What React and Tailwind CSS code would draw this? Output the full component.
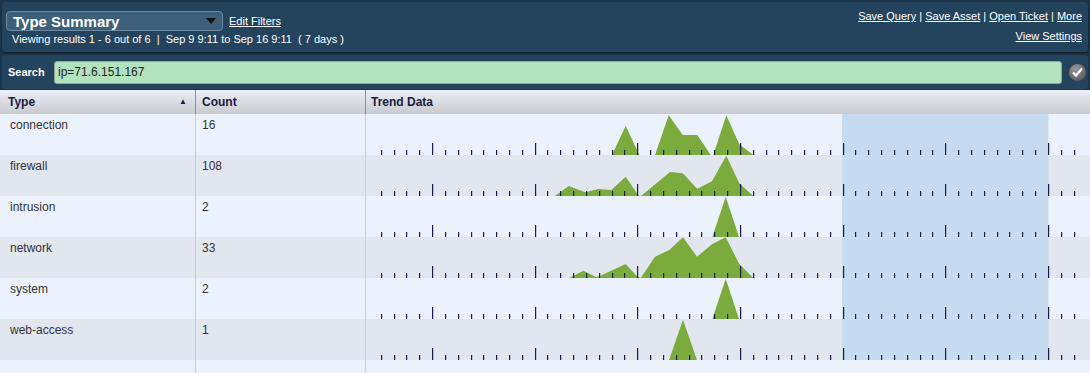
import React from "react";

// tick layout of the trend column (x is relative to the column's left edge)
const TICK_START = 14.7;
const STEP = 12.83;
const TREND_LEFT = 366;
const tickX = (i) => TICK_START + STEP * i;

const ROWS = [
  {
    type: "connection",
    count: "16",
    shapes: [
      [[612, 41], [625.7, 11.7], [639.3, 41]],
      [[655, 41], [668.7, 1.3], [682.7, 21], [697.3, 21], [710.7, 41]],
      [[713.3, 41], [726.3, 1.3], [739.3, 30.3], [753.3, 41]],
    ],
  },
  {
    type: "firewall",
    count: "108",
    shapes: [
      [
        [555, 41], [568.7, 31], [585.3, 37.3], [598.3, 34], [611.3, 35],
        [625.7, 21.7], [638.5, 40.5], [641, 41], [670, 17], [682.7, 18.3],
        [697.3, 33.7], [712, 26.3], [726.3, 0.7], [739.3, 28.3], [753.3, 41],
      ],
    ],
  },
  {
    type: "intrusion",
    count: "2",
    shapes: [[[712.3, 41], [725.7, 0.7], [739, 41]]],
  },
  {
    type: "network",
    count: "33",
    shapes: [
      [
        [569.3, 41], [583.3, 33.7], [596, 40], [598.7, 39.5], [625.7, 27],
        [636.7, 39], [640.7, 41], [655, 19.7], [669.3, 13], [683, 0.3],
        [697, 19.7], [712.3, 7], [725.7, 0.3], [739.3, 27], [753.3, 41],
      ],
    ],
  },
  {
    type: "system",
    count: "2",
    shapes: [[[712.3, 41], [725.7, 0.7], [739, 41]]],
  },
  {
    type: "web-access",
    count: "1",
    shapes: [[[669, 41], [683, 0.7], [697, 41]]],
  },
];

const TrendChart = ({ shapes }) => (
  <svg width="724" height="41" className="block">
    {/* highlighted time window */}
    <rect
      x={tickX(36) - 0.5}
      y="0"
      width={tickX(52) - tickX(36) + 1}
      height="41"
      fill="#c6dbef"
    />
    {shapes.map((pts, i) => (
      <polygon
        key={i}
        points={pts.map(([x, y]) => `${x - TREND_LEFT},${y}`).join(" ")}
        fill="#7aab3c"
      />
    ))}
    {Array.from({ length: 55 }, (_, i) => {
      const tall = i % 8 === 4;
      return (
        <rect
          key={i}
          x={Math.round(tickX(i))}
          y={tall ? 29 : 36}
          width="1.2"
          height={tall ? 12 : 5}
          fill="#1b1b4b"
        />
      );
    })}
  </svg>
);

const App = () => {
  return (
    <div className="w-[1090px] h-[373px] overflow-hidden bg-[#1b364c] font-['Liberation_Sans',Arial,sans-serif] text-white">
      {/* Top panel */}
      <div className="mx-[2px] pt-[2px]">
        <div className="h-[50px] rounded-[3px] bg-[#24435c] shadow-[0_1px_2px_rgba(0,0,0,0.5)] flex justify-between">
          <div className="pl-[4px] pt-[9px]">
            <div className="flex items-center gap-[6px]">
              <div className="w-[217px] h-[20px] rounded-[4px] border border-[#6b8aa1] bg-[#3e5f79] flex items-center justify-between pl-[6px] pr-[6px]">
                <span className="text-[15px] font-bold leading-none">
                  Type Summary
                </span>
                <svg width="10" height="6" viewBox="0 0 10 6">
                  <polygon points="0,0 10,0 5,6" fill="#111" />
                </svg>
              </div>
              <a className="text-[11px] underline leading-[13px]">Edit Filters</a>
            </div>
            <div className="mt-[2px] pl-[6px] text-[11px] leading-[13px] whitespace-pre">
              Viewing results 1 - 6 out of 6{"  "}|{"  "}Sep 9 9:11 to Sep 16 9:11{"  "}( 7 days )
            </div>
          </div>
          <div className="pr-[6px] pt-[8px] text-[11px] leading-[13px] text-right">
            <div>
              <a className="underline">Save Query</a> | <a className="underline">Save Asset</a> |{" "}
              <a className="underline">Open Ticket</a> | <a className="underline">More</a>
            </div>
            <div className="mt-[7px]">
              <a className="underline">View Settings</a>
            </div>
          </div>
        </div>
      </div>

      {/* Search panel */}
      <div className="mx-[2px] mt-[3px] h-[34px] rounded-[3px] bg-[#24435c] flex items-center pl-[6px]">
        <span className="text-[11px] font-bold w-[46px]">Search</span>
        <div className="w-[1008px] h-[23px] rounded-[3px] border border-[#8ea6a0] bg-[#b3e3be] flex items-center pl-[3px] text-[12px] text-[#222]">
          ip=71.6.151.167
        </div>
        <div className="ml-[7px] w-[17px] h-[17px] rounded-full bg-[radial-gradient(circle_at_40%_30%,#9a9a9a,#4a4a4a)] flex items-center justify-center">
          <svg width="11" height="10" viewBox="0 0 11 10">
            <path d="M1 5.5 L4 8.5 L10 1.5" stroke="#fff" strokeWidth="2.2" fill="none" />
          </svg>
        </div>
      </div>

      {/* Table */}
      <div className="mt-[1px] text-[12px]">
        <div className="h-[24px] grid grid-cols-[195px_170px_1fr] bg-gradient-to-b from-[#eceff8] to-[#c9cacf] text-[#1c1c3c] font-bold">
          <div className="flex items-center justify-between pl-[8px] pr-[8px]">
            <span>Type</span>
            <span className="text-[8px]">▲</span>
          </div>
          <div className="flex items-center pl-[6px] border-l border-[#8f9096]">Count</div>
          <div className="flex items-center pl-[5px] border-l border-[#8f9096]">Trend Data</div>
        </div>
        {ROWS.map((row, i) => (
          <div
            key={row.type}
            className={`h-[41px] grid grid-cols-[195px_170px_1fr] text-[#333] ${
              i % 2 === 0 ? "bg-[#ecf2fb]" : "bg-[#e2e6ef]"
            }`}
          >
            <div className="pl-[10px] pt-[2px]">{row.type}</div>
            <div className="pl-[6px] pt-[2px] border-l border-[#c9ccd3]">{row.count}</div>
            <div className="border-l border-[#c9ccd3] overflow-hidden">
              <TrendChart shapes={row.shapes} />
            </div>
          </div>
        ))}
        <div className="h-[41px] grid grid-cols-[195px_170px_1fr] bg-[#ecf2fb]">
          <div />
          <div className="border-l border-[#c9ccd3]" />
          <div className="border-l border-[#c9ccd3]" />
        </div>
      </div>
    </div>
  );
};

export default App;
